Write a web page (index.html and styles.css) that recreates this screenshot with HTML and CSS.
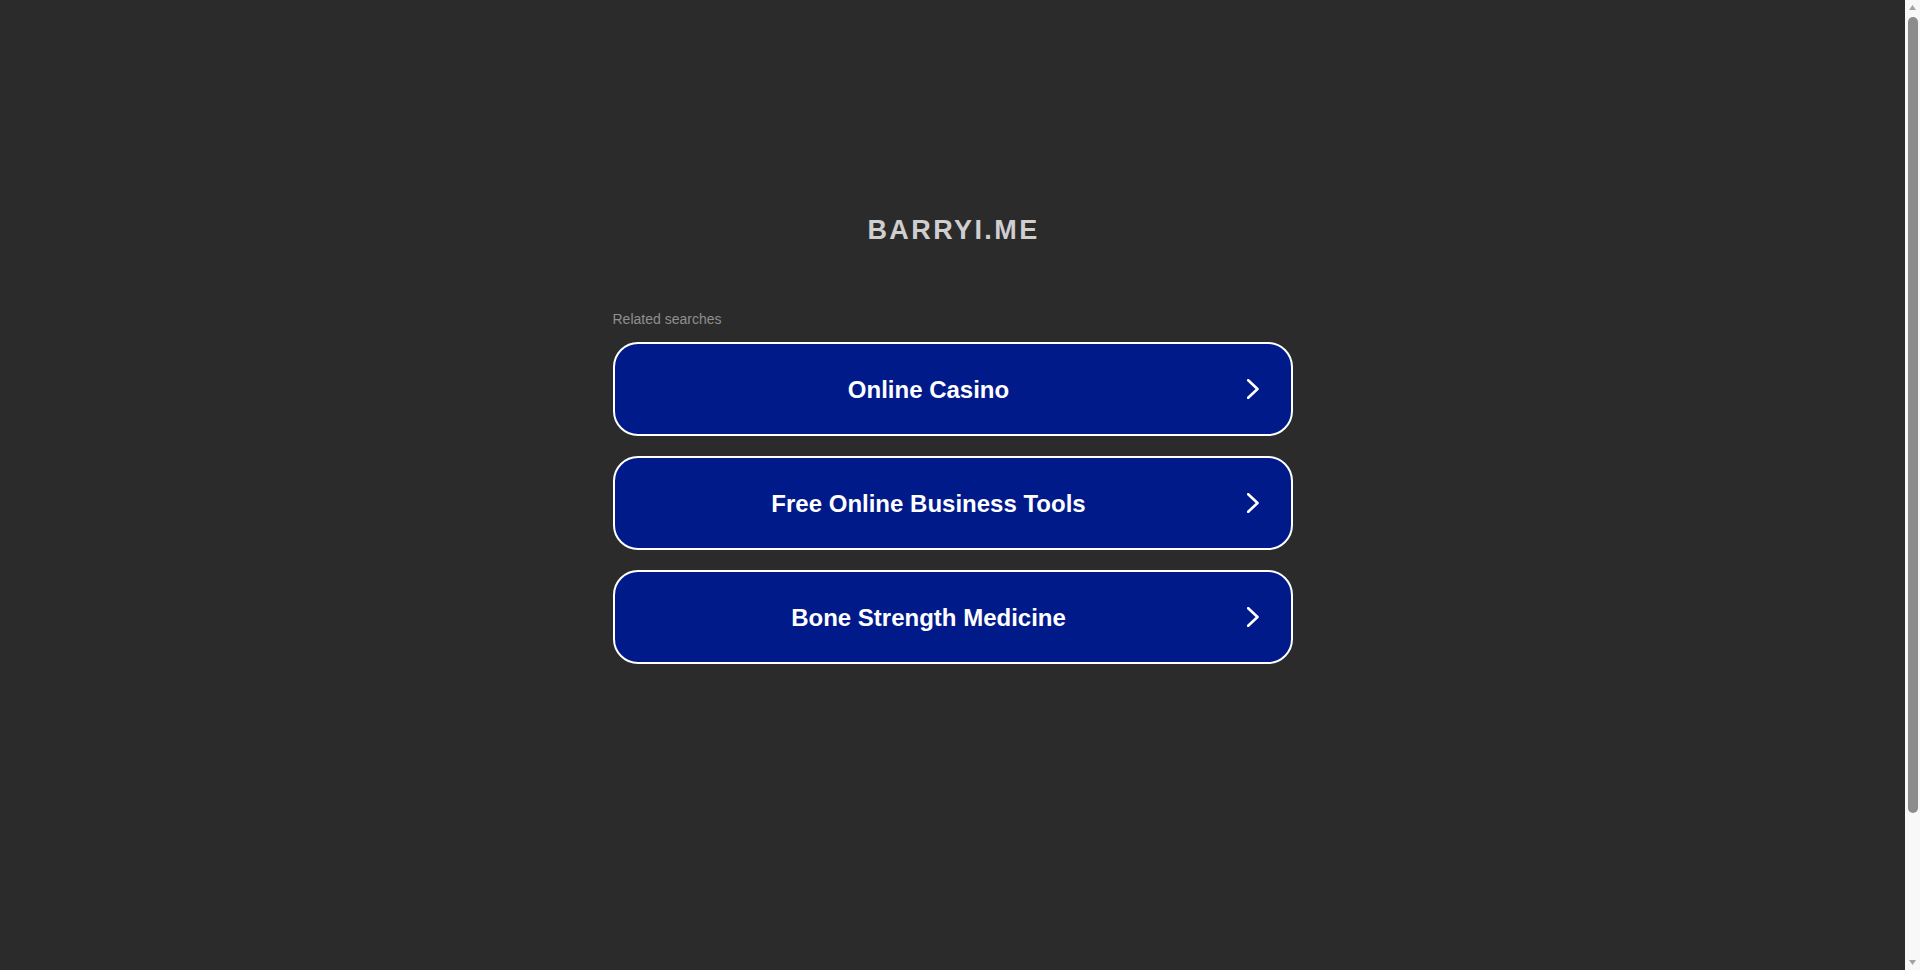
FILE: index.html
```html
<!DOCTYPE html>
<html lang="en">
<head>
<meta charset="utf-8">
<title>barryi.me</title>
<link rel="stylesheet" href="styles.css">
</head>
<body>
<div class="page">
  <main class="container">
    <h1 class="domain">BARRYI.ME</h1>
    <p class="related">Related searches</p>
    <div class="links">
      <a class="link" href="#">
        <span class="label">Online Casino</span>
        <span class="arrow"><svg width="12" height="20" viewBox="0 0 12 20"><polyline points="1.2,1.2 10.5,10 1.2,18.8" fill="none" stroke="#fff" stroke-width="2.6" stroke-linecap="round" stroke-linejoin="round"/></svg></span>
      </a>
      <a class="link" href="#">
        <span class="label">Free Online Business Tools</span>
        <span class="arrow"><svg width="12" height="20" viewBox="0 0 12 20"><polyline points="1.2,1.2 10.5,10 1.2,18.8" fill="none" stroke="#fff" stroke-width="2.6" stroke-linecap="round" stroke-linejoin="round"/></svg></span>
      </a>
      <a class="link" href="#">
        <span class="label">Bone Strength Medicine</span>
        <span class="arrow"><svg width="12" height="20" viewBox="0 0 12 20"><polyline points="1.2,1.2 10.5,10 1.2,18.8" fill="none" stroke="#fff" stroke-width="2.6" stroke-linecap="round" stroke-linejoin="round"/></svg></span>
      </a>
    </div>
  </main>
</div>
<div class="scrollbar" aria-hidden="true">
  <svg class="sb-arrow" width="15" height="15" viewBox="0 0 15 15"><polygon points="4,10 11,10 7.5,5" fill="#a3a3a3"/></svg>
  <div class="sb-track"><div class="sb-thumb"></div></div>
  <svg class="sb-arrow" width="15" height="15" viewBox="0 0 15 15"><polygon points="4,5 11,5 7.5,10" fill="#a3a3a3"/></svg>
</div>
</body>
</html>
```
FILE: styles.css
```css
html, body {
  margin: 0;
  padding: 0;
  background: #2b2b2b;
}
body {
  font-family: "Liberation Sans", Arial, sans-serif;
}
.page {
  min-height: 970px;
  padding-top: 215px;
  padding-right: 15px;
  box-sizing: border-box;
}
.container {
  width: 680px;
  margin: 0 auto;
  display: flex;
  flex-direction: column;
}
.domain {
  margin: 0;
  font-size: 27px;
  line-height: 31px;
  font-weight: bold;
  letter-spacing: 2.4px;
  color: #cfcfcf;
  text-align: center;
  padding-left: 2px;
}
.related {
  margin: 65px 0 0 0;
  font-size: 14px;
  line-height: 16px;
  color: #8f8f8f;
}
.links {
  margin-top: 15px;
  display: flex;
  flex-direction: column;
  gap: 20px;
}
.link {
  box-sizing: border-box;
  height: 94px;
  border: 2px solid #ffffff;
  border-radius: 25px;
  background: #011a8a;
  display: flex;
  align-items: center;
  text-decoration: none;
  color: #ffffff;
}
.label {
  flex: 1;
  text-align: center;
  font-size: 24px;
  font-weight: bold;
  line-height: 28px;
  padding-top: 1px;
}
.arrow {
  width: 48px;
  display: flex;
  align-items: center;
}
.arrow svg {
  margin-left: 4px;
  display: block;
}
.scrollbar {
  position: fixed;
  top: 0;
  right: 0;
  bottom: 0;
  width: 15px;
  background: #f8f8f8;
  display: flex;
  flex-direction: column;
}
.sb-arrow {
  display: block;
  flex: none;
}
.sb-track {
  flex: 1;
  padding: 2px 2px 0 3px;
}
.sb-thumb {
  height: 796px;
  background: #8c8c8c;
  border-radius: 5px;
}
```
